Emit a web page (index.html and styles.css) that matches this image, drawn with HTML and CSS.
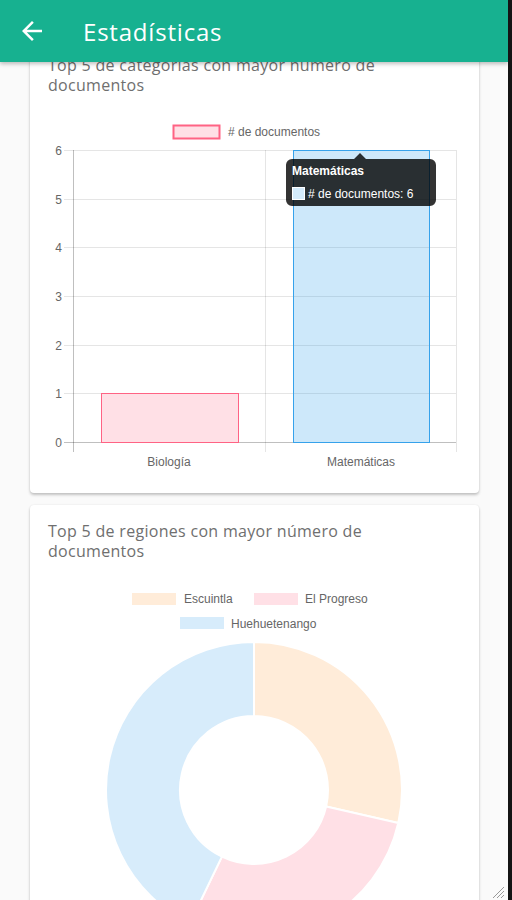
FILE: index.html
```html
<!DOCTYPE html>
<html lang="es">
<head>
  <meta charset="UTF-8">
  <meta name="viewport" content="width=device-width, initial-scale=1.0">
  <title>Estadísticas</title>
  <link rel="stylesheet" href="styles.css">
</head>
<body>
  <div class="screen">
    <header class="app-bar">
      <svg class="back-icon" viewBox="0 0 24 24" width="30" height="30">
        <path d="M20 11H7.83l5.59-5.59L12 4l-8 8 8 8 1.41-1.41L7.83 13H20v-2z" fill="#fff"/>
      </svg>
      <h1 class="app-title">Estadísticas</h1>
    </header>

    <main class="content">
      <!-- Categorias -->
      <section class="card">
        <h2 class="card-title">Top 5 de categorías con mayor número de documentos</h2>
        <svg class="chart" width="413" height="365" viewBox="0 0 413 365">
          <!-- legend -->
          <rect x="125.5" y="15.5" width="46" height="13" fill="rgba(255,99,132,0.2)" stroke="rgb(255,99,132)" stroke-width="2"/>
          <text class="chart-text" x="180" y="25.5">&#35; de documentos</text>

          <!-- grid -->
          <g stroke="rgba(0,0,0,0.1)" stroke-width="1">
            <line x1="16" y1="40.5" x2="408" y2="40.5"/>
            <line x1="16" y1="89.5" x2="408" y2="89.5"/>
            <line x1="16" y1="137.5" x2="408" y2="137.5"/>
            <line x1="16" y1="186.5" x2="408" y2="186.5"/>
            <line x1="16" y1="235.5" x2="408" y2="235.5"/>
            <line x1="16" y1="283.5" x2="408" y2="283.5"/>
            <line x1="217.5" y1="40" x2="217.5" y2="342"/>
            <line x1="408.5" y1="40" x2="408.5" y2="342"/>
          </g>
          <g stroke="rgba(0,0,0,0.25)" stroke-width="1">
            <line x1="16" y1="332.5" x2="408" y2="332.5"/>
            <line x1="25.5" y1="40" x2="25.5" y2="342"/>
          </g>

          <!-- y ticks -->
          <g class="chart-text" text-anchor="end">
            <text x="14" y="44.5">6</text>
            <text x="14" y="93.5">5</text>
            <text x="14" y="141.5">4</text>
            <text x="14" y="190.5">3</text>
            <text x="14" y="239.5">2</text>
            <text x="14" y="287.5">1</text>
            <text x="14" y="336.5">0</text>
          </g>

          <!-- bars -->
          <rect x="53.5" y="283.5" width="137" height="49" fill="rgba(255,99,132,0.2)" stroke="rgb(255,99,132)" stroke-width="1"/>
          <rect x="245.5" y="40.5" width="136" height="292" fill="rgba(54,162,235,0.25)" stroke="rgb(54,162,235)" stroke-width="1"/>

          <!-- x labels -->
          <g class="chart-text" text-anchor="middle">
            <text x="121" y="356">Biología</text>
            <text x="313" y="356">Matemáticas</text>
          </g>

          <!-- tooltip -->
          <path d="M244 49h62l6-6 6 6h64a6 6 0 0 1 6 6v35a6 6 0 0 1-6 6H244a6 6 0 0 1-6-6V55a6 6 0 0 1 6-6z" fill="rgba(0,0,0,0.8)"/>
          <text class="tip-title" x="244" y="65">Matemáticas</text>
          <rect x="244.5" y="77.5" width="12" height="12" fill="#d4ebfb" stroke="#fff" stroke-width="1"/>
          <text class="tip-body" x="260" y="88">&#35; de documentos: 6</text>
        </svg>
      </section>

      <!-- Regiones -->
      <section class="card card-last">
        <h2 class="card-title">Top 5 de regiones con mayor número de documentos</h2>
        <svg class="chart" width="413" height="380" viewBox="0 0 413 380">
          <rect x="84" y="18" width="44" height="12" fill="rgba(255,159,64,0.2)"/>
          <text class="chart-text" x="136" y="28">Escuintla</text>
          <rect x="206" y="18" width="44" height="12" fill="rgba(255,99,132,0.2)"/>
          <text class="chart-text" x="257" y="28">El Progreso</text>
          <rect x="132" y="42" width="44" height="12" fill="rgba(54,162,235,0.2)"/>
          <text class="chart-text" x="183" y="53">Huehuetenango</text>

          <g stroke="#fff" stroke-width="2">
            <path d="M206 67A148 148 0 0 1 350.29 247.93L278.14 231.47A74 74 0 0 0 206 141Z" fill="#ffecd9"/>
            <path d="M350.29 247.93A148 148 0 0 1 141.79 348.34L173.89 281.67A74 74 0 0 0 278.14 231.47Z" fill="#ffe0e6"/>
            <path d="M141.79 348.34A148 148 0 0 1 206 67L206 141A74 74 0 0 0 173.89 281.67Z" fill="#d7ecfb"/>
          </g>
        </svg>
      </section>
    </main>

    <svg class="resize-grip" viewBox="0 0 14 14" width="14" height="14">
      <g stroke="#999" stroke-width="1">
        <line x1="13" y1="2" x2="2" y2="13"/>
        <line x1="13" y1="6" x2="6" y2="13"/>
        <line x1="13" y1="10" x2="10" y2="13"/>
      </g>
    </svg>
  </div>
</body>
</html>
```

FILE: styles.css
```css
html, body {
  margin: 0;
  padding: 0;
  background-color: #141414;
}

.screen {
  position: relative;
  width: 508px;
  height: 900px;
  overflow: hidden;
  background-color: #fafafa;
}

.app-bar {
  position: absolute;
  top: 0;
  left: 0;
  right: 0;
  z-index: 2;
  height: 62px;
  display: flex;
  align-items: center;
  background-color: #17b190;
  box-shadow: 0 2px 4px rgba(0, 0, 0, 0.25);
}

.back-icon {
  margin-left: 17px;
}

.app-title {
  margin: 0 0 0 36px;
  font-family: "Open Sans", sans-serif;
  font-weight: 500;
  font-size: 24px;
  letter-spacing: 0.8px;
  color: #ffffff;
}

.content {
  padding: 39px 29px 0 30px;
}

.card {
  background-color: #ffffff;
  border-radius: 4px;
  padding: 16px 18px 18px;
  margin-bottom: 12px;
  box-shadow: 0 2px 3px rgba(0, 0, 0, 0.22), 0 0 2px rgba(0, 0, 0, 0.08);
}

.card-title {
  max-width: 380px;
  margin: 0;
  font-family: "Open Sans", sans-serif;
  font-weight: 400;
  font-size: 16px;
  line-height: 20px;
  letter-spacing: 0.3px;
  color: #6f6f6f;
}

.chart {
  display: block;
  margin-top: 15px;
}

.card-last .chart {
  margin-top: 14px;
}

.chart-text {
  font-family: "Liberation Sans", Arial, sans-serif;
  font-size: 12px;
  fill: #666666;
}

.tip-title {
  font-family: "Liberation Sans", Arial, sans-serif;
  font-size: 12px;
  font-weight: bold;
  fill: #ffffff;
}

.tip-body {
  font-family: "Liberation Sans", Arial, sans-serif;
  font-size: 12px;
  fill: #ffffff;
}

.resize-grip {
  position: absolute;
  right: 3px;
  bottom: 1px;
}
```
